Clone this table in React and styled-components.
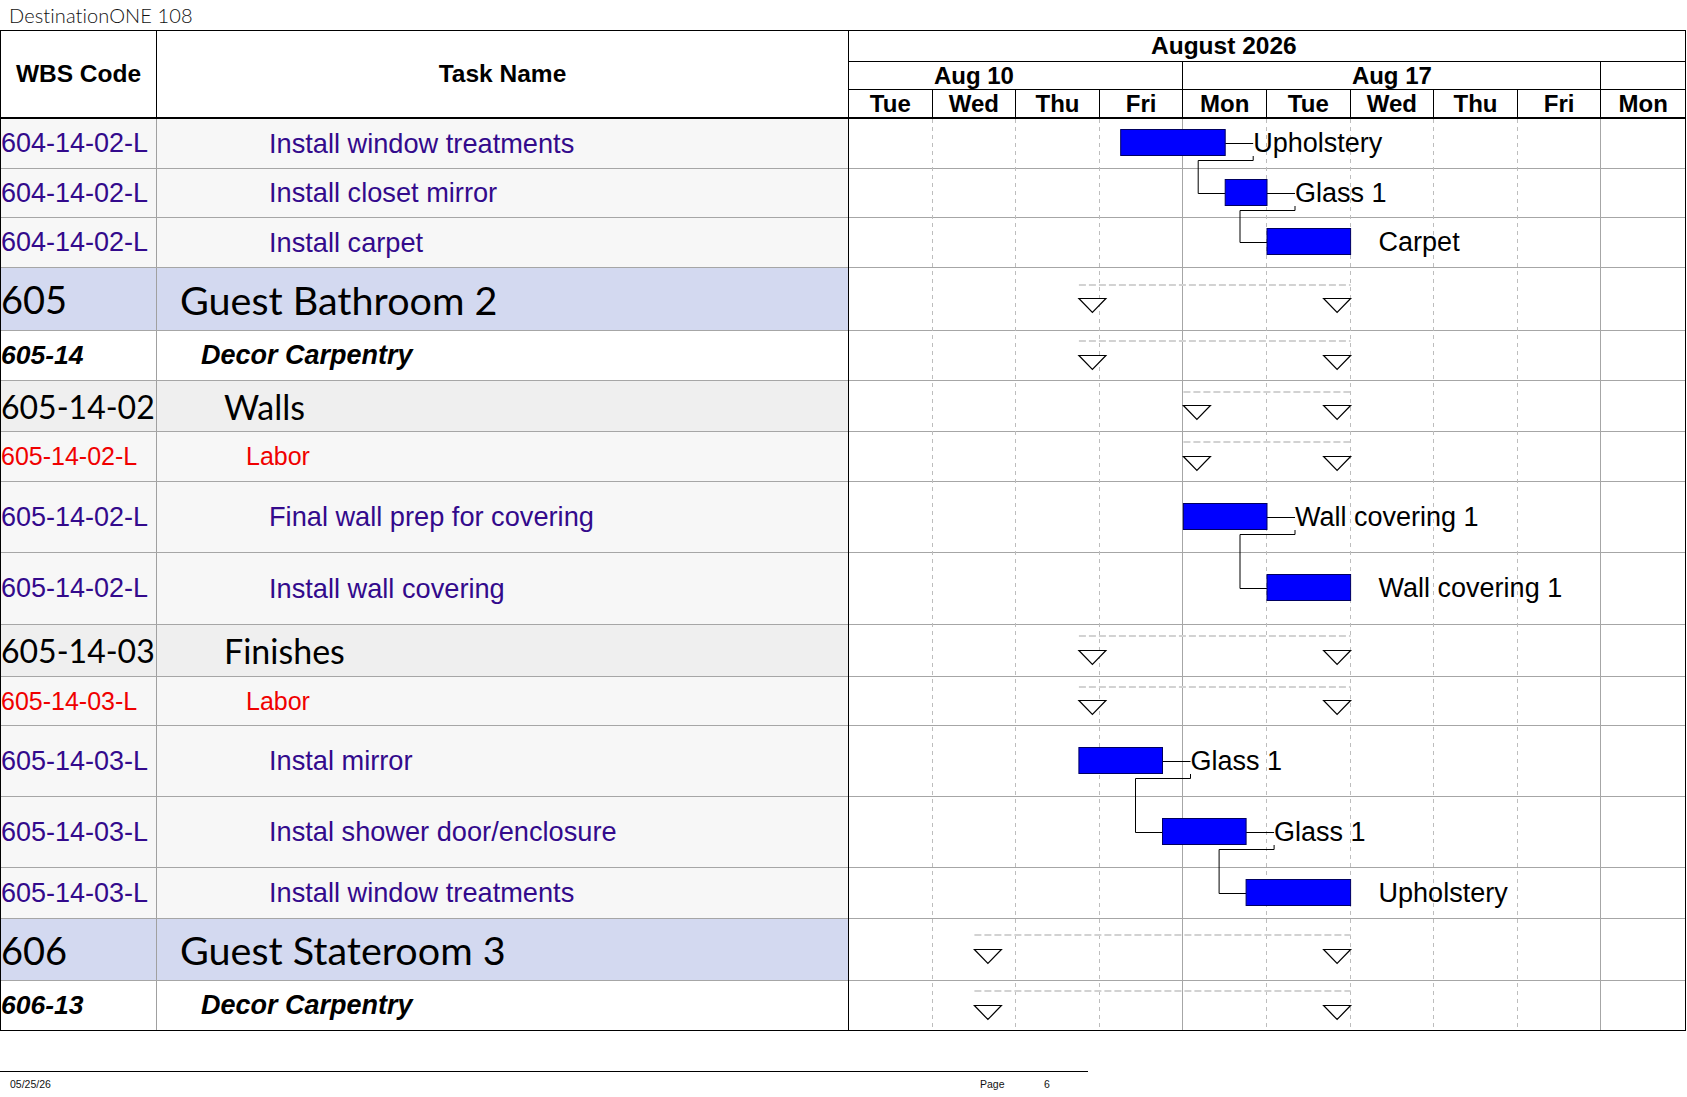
import React from "react";
import styled, { createGlobalStyle } from "styled-components";

const SANS = `"Liberation Sans", Arial, sans-serif`;
const LATO = `Lato, "Open Sans", sans-serif`;

const DAY = 83.6;
const X0 = 849;
const Y0 = 119;
const dx = (d) => X0 + d * DAY;

const days = ["Tue", "Wed", "Thu", "Fri", "Mon", "Tue", "Wed", "Thu", "Fri", "Mon"];
const weeks = [
  { label: "Aug 10", span: 4, clipped: true },
  { label: "Aug 17", span: 5 },
  { label: "", span: 1 },
];

const rows = [
  { kind: "task", code: "604-14-02-L", name: "Install window treatments", h: 50, bar: [3.25, 4.5], label: "Upholstery", link: true },
  { kind: "task", code: "604-14-02-L", name: "Install closet mirror", h: 49, bar: [4.5, 5], label: "Glass 1", link: true },
  { kind: "task", code: "604-14-02-L", name: "Install carpet", h: 50, bar: [5, 6], label: "Carpet" },
  { kind: "group", code: "605", name: "Guest Bathroom 2", h: 63, span: [2.75, 6] },
  { kind: "phase", code: "605-14", name: "Decor Carpentry", h: 50, span: [2.75, 6] },
  { kind: "section", code: "605-14-02", name: "Walls", h: 51, span: [4, 6] },
  { kind: "labor", code: "605-14-02-L", name: "Labor", h: 50, span: [4, 6] },
  { kind: "task", code: "605-14-02-L", name: "Final wall prep for covering", h: 71, bar: [4, 5], label: "Wall covering 1", link: true },
  { kind: "task", code: "605-14-02-L", name: "Install wall covering", h: 72, bar: [5, 6], label: "Wall covering 1" },
  { kind: "section", code: "605-14-03", name: "Finishes", h: 52, span: [2.75, 6] },
  { kind: "labor", code: "605-14-03-L", name: "Labor", h: 49, span: [2.75, 6] },
  { kind: "task", code: "605-14-03-L", name: "Instal mirror", h: 71, bar: [2.75, 3.75], label: "Glass 1", link: true },
  { kind: "task", code: "605-14-03-L", name: "Instal shower door/enclosure", h: 71, bar: [3.75, 4.75], label: "Glass 1", link: true },
  { kind: "task", code: "605-14-03-L", name: "Install window treatments", h: 51, bar: [4.75, 6], label: "Upholstery" },
  { kind: "group", code: "606", name: "Guest Stateroom 3", h: 62, span: [1.5, 6] },
  { kind: "phase", code: "606-13", name: "Decor Carpentry", h: 50, span: [1.5, 6] },
];

// per row style: code column and name column can differ in size
const kinds = {
  task: { bg: "#f7f7f7", color: "#330a8c", font: SANS, codeSize: 27, size: 27.2, weight: 400, style: "normal", indent: 112 },
  labor: { bg: "#f7f7f7", color: "#f00000", font: SANS, codeSize: 25, size: 25, weight: 400, style: "normal", indent: 89 },
  group: { bg: "#d3d9f0", color: "#000", font: LATO, codeSize: 38, size: 39.5, weight: 400, style: "normal", indent: 23 },
  section: { bg: "#efefef", color: "#000", font: LATO, codeSize: 32, size: 34, weight: 400, style: "normal", indent: 67 },
  phase: { bg: "#fff", color: "#000", font: SANS, codeSize: 26.5, size: 27, weight: 700, style: "italic", indent: 44 },
};

const GlobalStyle = createGlobalStyle`
  * { box-sizing: border-box; }
  html, body { margin: 0; padding: 0; background: #fff; }
  body { font-family: ${SANS}; color: #000; }
`;

const Page = styled.div`
  width: 1687px;
  height: 1097px;
  overflow: hidden;
`;

const Title = styled.div`
  height: 30px;
  display: flex;
  align-items: center;
  padding-left: 9px;
  font-family: ${LATO};
  font-weight: 300;
  font-size: 20px;
  letter-spacing: 0.1px;
  color: #111;
`;

const Sheet = styled.div`
  width: 1686px;
  display: flex;
  border: 1px solid #000;
  border-bottom: none;
`;

const LeftPane = styled.div`
  width: 848px;
  border-right: 1px solid #000;
`;

const ChartPane = styled.div`
  flex: 1;
  min-width: 0;
`;

const LeftHead = styled.div`
  display: grid;
  grid-template-columns: 156px 1fr;
  height: 88px;
  border-bottom: 2px solid #000;
`;

const HeadCell = styled.div`
  display: flex;
  align-items: center;
  justify-content: center;
  font-weight: 700;
  font-size: 24.5px;
  border-right: ${(p) => (p.$divider ? "1px solid #000" : "none")};
`;

const LeftRow = styled.div`
  display: grid;
  grid-template-columns: 156px 1fr;
  height: ${(p) => p.$h}px;
  background: ${(p) => p.$k.bg};
  border-bottom: 1px solid #a6a6a6;
  color: ${(p) => p.$k.color};
  font-family: ${(p) => p.$k.font};
  font-weight: ${(p) => p.$k.weight};
  font-style: ${(p) => p.$k.style};
  &:last-child {
    border-bottom-color: #000;
  }
`;

const CodeCell = styled.div`
  display: flex;
  align-items: center;
  font-size: ${(p) => p.$size}px;
  border-right: 1px solid #a0a0a0;
  white-space: nowrap;
  overflow: hidden;
`;

const NameCell = styled.div`
  display: flex;
  align-items: center;
  font-size: ${(p) => p.$size}px;
  padding-left: ${(p) => p.$indent}px;
  white-space: nowrap;
  overflow: hidden;
`;

const MonthRow = styled.div`
  height: 31px;
  display: flex;
  align-items: center;
  padding-left: 302px;
  border-bottom: 1px solid #000;
  font-weight: 700;
  font-size: 24.5px;
`;

const WeekRow = styled.div`
  height: 28px;
  display: grid;
  grid-template-columns: repeat(10, 1fr);
  border-bottom: 1px solid #000;
`;

const WeekCell = styled.div`
  grid-column: span ${(p) => p.$span};
  display: flex;
  align-items: center;
  justify-content: center;
  padding-right: ${(p) => (p.$clipped ? DAY : 0)}px;
  font-weight: 700;
  font-size: 24px;
  border-right: 1px solid #000;
  &:last-child {
    border-right: none;
  }
`;

const DayRow = styled.div`
  height: 29px;
  display: grid;
  grid-template-columns: repeat(10, 1fr);
  border-bottom: 2px solid #000;
`;

const DayCell = styled.div`
  display: flex;
  align-items: center;
  justify-content: center;
  font-weight: 700;
  font-size: 24px;
  border-right: 1px solid #000;
  &:last-child {
    border-right: none;
  }
`;

const ChartBody = styled.div`
  position: relative;
`;

const ChartRow = styled.div`
  height: ${(p) => p.$h}px;
  background: #fff;
  border-bottom: 1px solid #a6a6a6;
  &:last-of-type {
    border-bottom-color: #000;
  }
`;

const Overlay = styled.svg`
  position: absolute;
  top: 0;
  left: 0;
  pointer-events: none;
`;

const BarLabel = styled.text`
  font-family: ${SANS};
  font-size: 27px;
  fill: #000;
`;

const Footer = styled.div`
  margin-top: 40px;
  width: 1088px;
  border-top: 1px solid #000;
  display: grid;
  grid-template-columns: 970px 64px auto;
  padding: 6px 0 0 10px;
  font-size: 10.5px;
  line-height: 12px;
  color: #111;
`;

function Gantt() {
  let top = Y0;
  const geo = rows.map((r) => {
    const g = { ...r, top, c: top + (r.h - 1) / 2 };
    top += r.h;
    return g;
  });
  const height = top - Y0;

  const bars = geo
    .filter((g) => g.bar)
    .map((g) => {
      const x1 = dx(g.bar[0]);
      const x2 = dx(g.bar[1]);
      const y = Math.round(g.c - 14.5);
      return { ...g, x1, x2, y, yc: y + 13.5, lx: x2 + 28 };
    });

  return (
    <Overlay width={836} height={height} viewBox={`${X0} ${Y0} 836 ${height}`}>
      {days.slice(1).map((d, i) => {
        const x = Math.round(dx(i + 1)) - 0.5;
        const solid = i + 1 === 4 || i + 1 === 9;
        return (
          <line
            key={i}
            x1={x}
            x2={x}
            y1={Y0}
            y2={Y0 + height - 1}
            stroke={solid ? "#a6a6a6" : "#bdbdbd"}
            strokeDasharray={solid ? undefined : "4 4"}
          />
        );
      })}

      {geo
        .filter((g) => g.span)
        .map((g, i) => {
          const x1 = dx(g.span[0]);
          const x2 = dx(g.span[1]);
          const t = Math.round(g.c - 1) + 0.5;
          const ly = Math.round(g.c - 14.5);
          return (
            <g key={i}>
              <line x1={x1} x2={x2} y1={ly} y2={ly} stroke="#d2d2d2" strokeWidth="2" strokeDasharray="7 3" />
              <polygon points={`${x1},${t} ${x1 + 27},${t} ${x1 + 13.5},${t + 14}`} fill="#fff" stroke="#000" strokeWidth="1.2" />
              <polygon points={`${x2 - 27},${t} ${x2},${t} ${x2 - 13.5},${t + 14}`} fill="#fff" stroke="#000" strokeWidth="1.2" />
            </g>
          );
        })}

      {bars.map((b, i) => {
        if (!b.link) return null;
        const n = bars[i + 1];
        const yb = b.y + 27;
        const yh = yb + 4.5;
        const mid = Math.round(b.yc) + 0.5;
        const nmid = Math.round(n.yc) + 0.5;
        return (
          <g key={i} fill="none" stroke="#000" strokeWidth="1">
            <path d={`M${b.x2} ${mid} H${b.lx}`} />
            <path d={`M${b.lx} ${yb} V${yh} H${n.x1 - 27} V${nmid} H${n.x1}`} />
          </g>
        );
      })}

      {bars.map((b, i) => (
        <g key={i}>
          <rect x={b.x1} y={b.y + 0.5} width={b.x2 - b.x1} height={26} fill="#0000ff" stroke="#000060" strokeWidth="1" />
          <BarLabel x={b.lx} y={b.yc + 9.5}>
            {b.label}
          </BarLabel>
        </g>
      ))}
    </Overlay>
  );
}

export default function App() {
  return (
    <Page>
      <GlobalStyle />
      <Title>DestinationONE 108</Title>
      <Sheet>
        <LeftPane>
          <LeftHead>
            <HeadCell $divider>WBS Code</HeadCell>
            <HeadCell>Task Name</HeadCell>
          </LeftHead>
          {rows.map((r, i) => {
            const k = kinds[r.kind];
            return (
              <LeftRow key={i} $h={r.h} $k={k}>
                <CodeCell $size={k.codeSize}>{r.code}</CodeCell>
                <NameCell $size={k.size} $indent={k.indent}>
                  {r.name}
                </NameCell>
              </LeftRow>
            );
          })}
        </LeftPane>
        <ChartPane>
          <MonthRow>August 2026</MonthRow>
          <WeekRow>
            {weeks.map((w, i) => (
              <WeekCell key={i} $span={w.span} $clipped={w.clipped}>
                {w.label}
              </WeekCell>
            ))}
          </WeekRow>
          <DayRow>
            {days.map((d, i) => (
              <DayCell key={i}>{d}</DayCell>
            ))}
          </DayRow>
          <ChartBody>
            {rows.map((r, i) => (
              <ChartRow key={i} $h={r.h} />
            ))}
            <Gantt />
          </ChartBody>
        </ChartPane>
      </Sheet>
      <Footer>
        <span>05/25/26</span>
        <span>Page</span>
        <span>6</span>
      </Footer>
    </Page>
  );
}
